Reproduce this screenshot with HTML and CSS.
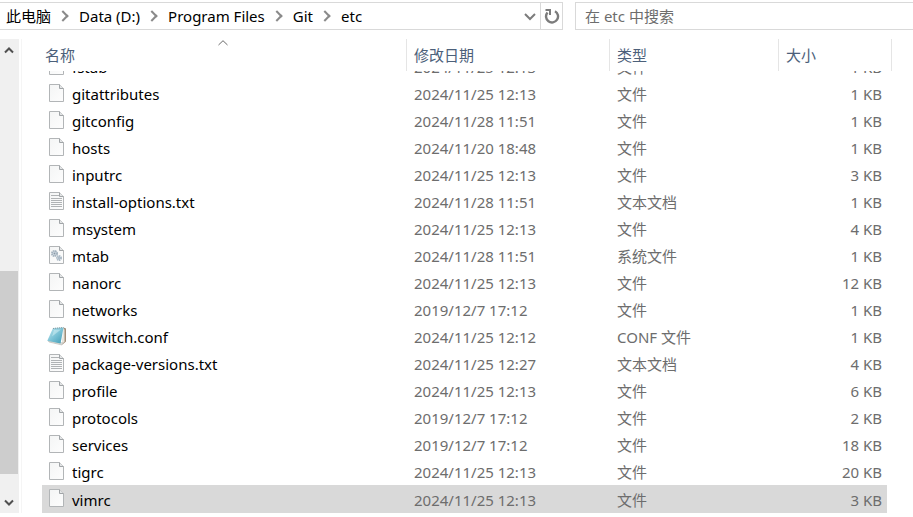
FILE: index.html
```html
<!DOCTYPE html>
<html lang="zh-CN">
<head>
<meta charset="utf-8">
<title>etc</title>
<link rel="stylesheet" href="styles.css">
</head>
<body>
<svg class="sprite" aria-hidden="true">
  <defs>
    <linearGradient id="paper" x1="0" y1="0" x2="1" y2="1">
      <stop offset="0" stop-color="#f4f5f5"/><stop offset="1" stop-color="#fdfdfd"/>
    </linearGradient>
    <linearGradient id="cover" x1="0" y1="0" x2="1" y2="1">
      <stop offset="0" stop-color="#c4e9f1"/><stop offset=".5" stop-color="#7cc3d6"/><stop offset="1" stop-color="#3f9bb5"/>
    </linearGradient>
    <symbol id="file" viewBox="0 0 20 20">
      <path d="M2.500 1.500h10l4 4v13h-14z" fill="url(#paper)" stroke="#b2b5b7"/>
      <path d="M12.500 1.500v4h4" fill="#e3e5e6" stroke="#a0a4a7"/>
    </symbol>
    <symbol id="text" viewBox="0 0 20 20">
      <use href="#file"/>
      <path d="M4 4.500h8M4 7.500h11M4 9.500h11M4 11.500h11M4 13.500h11M4 15.500h11" stroke="#b0b3b5"/>
    </symbol>
    <symbol id="system" viewBox="0 0 20 20">
      <use href="#file"/>
      <circle cx="7.500" cy="8.500" r="2.500" fill="#dce5ec" stroke="#a3b2be" stroke-width="2" stroke-dasharray="1.500 .5"/>
      <circle cx="7.500" cy="8.500" r="1" fill="#8797a5"/>
      <circle cx="12" cy="13" r="2" fill="#d3dfe8" stroke="#abb9c5" stroke-width="2" stroke-dasharray="1.200 .5"/>
      <circle cx="12" cy="13" r=".8" fill="#8b9cab"/>
    </symbol>
    <symbol id="notepad" viewBox="0 0 20 20">
      <path d="M16.500 1.500l2.500 1v13l-3.500 3z" fill="#a08d78"/>
      <path d="M16 2.500l1.500 1v12l-2.500 3z" fill="#e7e5dd"/>
      <path d="M1 14.500l1 1.500 13 3 1-2z" fill="#deded9" stroke="#a8a9a5" stroke-width=".5"/>
      <path d="M6 2l10.500-.5L13.500 17.500.3 14.800z" fill="url(#cover)"/>
      <path d="M6 2.500l10.500-1" stroke="#8a989c" stroke-dasharray="1 1"/>
      <path d="M7 4l7-.5-9 7z" fill="#d7f1f6" opacity=".5"/>
    </symbol>
  </defs>
</svg>

<div class="toolbar">
  <nav class="address" aria-label="路径">
    <ol class="crumbs">
      <li><a href="#">此电脑</a></li>
      <li><a href="#">Data (D:)</a></li>
      <li><a href="#">Program Files</a></li>
      <li><a href="#">Git</a></li>
      <li><a href="#">etc</a></li>
    </ol>
    <button class="history" aria-label="以前的位置"><svg width="12" height="8" viewBox="0 0 12 8"><path d="M1 1l5 5 5-5" fill="none" stroke="#7c7c7c" stroke-width="2"/></svg></button>
    <button class="refresh" aria-label="刷新"><svg width="16" height="16" viewBox="0 0 16 16"><path d="M11 3.200A6 6 0 1 1 3.500 4.500" fill="none" stroke="#7c7c7c" stroke-width="2.400"/><path d="M1.500 2h4.500v5" fill="none" stroke="#7c7c7c" stroke-width="2"/></svg></button>
  </nav>
  <input class="search" type="search" placeholder="在 etc 中搜索" aria-label="搜索">
</div>

<div class="content">
  <div class="scrollbar">
    <button aria-label="向上滚动"><svg width="10" height="8" viewBox="0 0 10 8"><path d="M1 6.500l4-4 4 4" fill="none" stroke="#505050" stroke-width="2"/></svg></button>
    <div class="track"><div class="thumb"></div></div>
    <button aria-label="向下滚动"><svg width="10" height="8" viewBox="0 0 10 8"><path d="M1 1.500l4 4 4-4" fill="none" stroke="#505050" stroke-width="2"/></svg></button>
  </div>
  <main class="list">
    <table>
      <thead>
        <tr>
          <th class="name">名称<svg class="sort" width="10" height="6" viewBox="0 0 10 6"><path d="M.5 5L5 .7 9.500 5" fill="none" stroke="#6a6a6a"/></svg></th>
          <th class="date">修改日期</th>
          <th class="type">类型</th>
          <th class="size">大小</th>
        </tr>
      </thead>
      <tbody>
        <tr class="cut"><td><div><svg class="icon"><use href="#file"/></svg>fstab</div></td><td><div>2024/11/25 12:13</div></td><td><div>文件</div></td><td><div>1 KB</div></td></tr>
        <tr><td><div><svg class="icon"><use href="#file"/></svg>gitattributes</div></td><td>2024/11/25 12:13</td><td>文件</td><td>1 KB</td></tr>
        <tr><td><div><svg class="icon"><use href="#file"/></svg>gitconfig</div></td><td>2024/11/28 11:51</td><td>文件</td><td>1 KB</td></tr>
        <tr><td><div><svg class="icon"><use href="#file"/></svg>hosts</div></td><td>2024/11/20 18:48</td><td>文件</td><td>1 KB</td></tr>
        <tr><td><div><svg class="icon"><use href="#file"/></svg>inputrc</div></td><td>2024/11/25 12:13</td><td>文件</td><td>3 KB</td></tr>
        <tr><td><div><svg class="icon"><use href="#text"/></svg>install-options.txt</div></td><td>2024/11/28 11:51</td><td>文本文档</td><td>1 KB</td></tr>
        <tr><td><div><svg class="icon"><use href="#file"/></svg>msystem</div></td><td>2024/11/25 12:13</td><td>文件</td><td>4 KB</td></tr>
        <tr><td><div><svg class="icon"><use href="#system"/></svg>mtab</div></td><td>2024/11/28 11:51</td><td>系统文件</td><td>1 KB</td></tr>
        <tr><td><div><svg class="icon"><use href="#file"/></svg>nanorc</div></td><td>2024/11/25 12:13</td><td>文件</td><td>12 KB</td></tr>
        <tr><td><div><svg class="icon"><use href="#file"/></svg>networks</div></td><td>2019/12/7 17:12</td><td>文件</td><td>1 KB</td></tr>
        <tr><td><div><svg class="icon"><use href="#notepad"/></svg>nsswitch.conf</div></td><td>2024/11/25 12:12</td><td>CONF 文件</td><td>1 KB</td></tr>
        <tr><td><div><svg class="icon"><use href="#text"/></svg>package-versions.txt</div></td><td>2024/11/25 12:27</td><td>文本文档</td><td>4 KB</td></tr>
        <tr><td><div><svg class="icon"><use href="#file"/></svg>profile</div></td><td>2024/11/25 12:13</td><td>文件</td><td>6 KB</td></tr>
        <tr><td><div><svg class="icon"><use href="#file"/></svg>protocols</div></td><td>2019/12/7 17:12</td><td>文件</td><td>2 KB</td></tr>
        <tr><td><div><svg class="icon"><use href="#file"/></svg>services</div></td><td>2019/12/7 17:12</td><td>文件</td><td>18 KB</td></tr>
        <tr><td><div><svg class="icon"><use href="#file"/></svg>tigrc</div></td><td>2024/11/25 12:13</td><td>文件</td><td>20 KB</td></tr>
        <tr class="selected"><td><div><svg class="icon"><use href="#file"/></svg>vimrc</div></td><td>2024/11/25 12:13</td><td>文件</td><td>3 KB</td></tr>
      </tbody>
    </table>
  </main>
</div>
</body>
</html>
```
FILE: styles.css
```css
* { box-sizing: border-box; }
body {
  margin: 0;
  overflow: hidden;
  background: #fff;
  color: #000;
  font: 15px/27px "Noto Sans", "Noto Sans CJK SC", sans-serif;
}
.sprite { position: absolute; width: 0; height: 0; }
button {
  display: flex;
  align-items: center;
  justify-content: center;
  padding: 0;
  border: 0;
  background: none;
}

.toolbar { display: flex; gap: 12px; padding-top: 2px; }
.address {
  display: flex;
  flex: 0 0 563px;
  height: 28px;
  border: 1px solid #d9d9d9;
  border-left: 0;
}
.crumbs {
  display: flex;
  flex: 1;
  margin: 0;
  padding: 0 0 0 6px;
  list-style: none;
  line-height: 26px;
}
.crumbs li { display: flex; align-items: center; }
.crumbs li + li::before {
  content: "";
  width: 6px;
  height: 6px;
  margin: 0 12px 0 8px;
  border: solid #8a8a8a;
  border-width: 2px 2px 0 0;
  transform: rotate(45deg);
}
.crumbs a { color: inherit; text-decoration: none; }
.history { width: 20px; padding-top: 2px; }
.refresh { width: 22px; border-left: 1px solid #d9d9d9; }
.search {
  flex: 1;
  min-width: 0;
  height: 28px;
  padding: 0 9px;
  border: 1px solid #d9d9d9;
  border-right: 0;
  border-radius: 0;
  outline: 0;
  appearance: none;
  background: #fff;
  font: inherit;
}
.search::placeholder { color: #6d6d6d; }

.content { display: flex; padding-top: 9px; }
.scrollbar {
  display: flex;
  flex-direction: column;
  width: 19px;
  background: #f0f0f0;
}
.scrollbar button { width: 18px; height: 21px; }
.track { flex: 1; }
.thumb { width: 18px; height: 47%; margin-top: 211px; background: #cdcdcd; }

.list {
  flex: 1;
  margin-left: 2px;
  padding: 0 21px 0 20px;
  border-left: 1px solid #f5f5f5;
}
table { width: 100%; border-collapse: separate; border-spacing: 0; table-layout: fixed; }
th {
  position: relative;
  height: 32px;
  padding: 0 7px;
  border-right: 1px solid #e5e5e5;
  color: #4c607a;
  font-weight: 400;
  text-align: left;
}
th.name { padding-left: 3px; }
.date { width: 203px; }
.type { width: 169px; }
.size { width: 113px; }
.sort { position: absolute; top: 1px; left: 50%; margin-left: -6px; }
td {
  height: 27px;
  padding: 2px 7px 0;
  color: #6d6d6d;
  line-height: 25px;
  white-space: nowrap;
}
td:first-child { padding-left: 5px; color: #000; }
td:first-child div { display: flex; align-items: center; gap: 5px; height: 25px; }
td:last-child {
  padding-right: 5px;
  border-right: 5px solid transparent;
  background-clip: padding-box;
  text-align: right;
}
.icon { width: 20px; height: 20px; margin-bottom: 4px; }
.cut td { height: 9px; padding-top: 0; vertical-align: bottom; }
.cut td div, .cut td:first-child div {
  display: flex;
  align-items: flex-end;
  height: 9px;
  overflow: hidden;
}
.cut td:last-child div { justify-content: flex-end; }
.selected td { height: 28px; background-color: #d9d9d9; }
```
